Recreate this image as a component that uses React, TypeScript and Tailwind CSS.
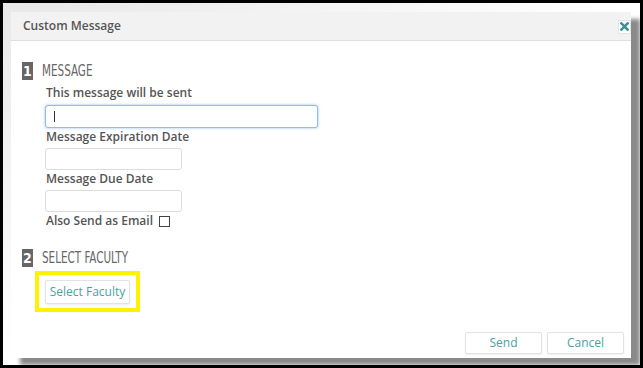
const sans = "font-['Open_Sans','Liberation_Sans',sans-serif]";
const narrow = "font-['DejaVu_Sans_Condensed','Liberation_Sans_Narrow',sans-serif]";

function SectionHeading({ num, title }: { num: string; title: string }) {
  return (
    <div className="flex h-[18px] items-center">
      <span
        className={`flex h-[18px] w-[11px] items-center justify-center bg-[#666] text-[14px] font-bold text-white ${narrow}`}
      >
        {num}
      </span>
      <span
        className={`ml-[9px] inline-block origin-left scale-x-[0.7] text-[16.5px] leading-none text-[#666] ${narrow}`}
      >
        {title}
      </span>
    </div>
  );
}

function Label({ children }: { children: React.ReactNode }) {
  return (
    <div className="ml-px h-[18px] text-[12px] font-semibold leading-[18px] text-[#555]">
      {children}
    </div>
  );
}

function CloseIcon() {
  return (
    <svg width="9" height="9" viewBox="0 0 10 10">
      <path
        d="M1.5 1.5 L8.5 8.5 M8.5 1.5 L1.5 8.5"
        stroke="#3d9292"
        strokeWidth="2.8"
        strokeLinecap="square"
      />
    </svg>
  );
}

const btn =
  "rounded-[2px] border border-[#e2e2e2] bg-white text-[12px] text-[#45a3a3] shadow-[0_1px_2px_rgba(0,0,0,0.07)]";

export default function App() {
  return (
    <div className={`h-[368px] w-[643px] bg-black p-[3px] ${sans}`}>
      <div className="h-full w-full overflow-hidden bg-gradient-to-br from-[#e8e8e8] via-white to-white pl-[8px] pt-[9px]">
        <div className="flex h-[346px] w-[620px] flex-col bg-white shadow-[9px_7px_4px_#8a8a8a]">
          <div className="flex h-[29px] shrink-0 items-center justify-between border-b border-[#e0e0e0] bg-[#f2f2f2] pl-[12px]">
            <span className="text-[12px] font-semibold text-[#555]">
              Custom Message
            </span>
            <span className="mt-[1px] flex h-[14px] w-[13px] items-center justify-center border border-[#e4e4e4] bg-white">
              <CloseIcon />
            </span>
          </div>

          <div className="flex flex-1 flex-col pl-[11px] pt-[21px]">
            <SectionHeading num="1" title="MESSAGE" />
            <div className="ml-[23px] mt-[3px] flex flex-col">
              <div className="ml-px h-[20px] text-[12px] font-semibold leading-[20px] text-[#555]">
                This message will be sent
              </div>
              <div className="mt-[2px] flex h-[23px] w-[273px] items-center rounded-[3px] border border-[#8ebde8] bg-white pl-[8px] shadow-[0_0_3px_rgba(82,151,222,0.6)]">
                <span className="h-[11px] w-px bg-[#333]" />
              </div>
              <Label>Message Expiration Date</Label>
              <div className="mt-[2px] h-[22px] w-[137px] rounded-[3px] border border-[#dcdcdc] bg-white" />
              <Label>Message Due Date</Label>
              <div className="mt-[2px] h-[22px] w-[137px] rounded-[3px] border border-[#dcdcdc] bg-white" />
              <div className="flex h-[18px] items-center">
                <span className="ml-px text-[12px] font-semibold text-[#555]">
                  Also Send as Email
                </span>
                <span className="ml-[6px] h-[11px] w-[11px] border border-[#444] bg-white" />
              </div>
            </div>

            <div className="mt-[19px]">
              <SectionHeading num="2" title="SELECT FACULTY" />
            </div>
            <div className="ml-[13px] mt-[4px] flex h-[41px] w-[105px] border-[4px] border-[#fff200] pl-[6px] pt-[5px]">
              <button className={`h-[24px] w-[85px] ${btn}`}>Select Faculty</button>
            </div>

            <div className="mt-auto flex justify-end gap-[5px] pb-[4px] pr-[7px]">
              <button className={`h-[22px] w-[77px] ${btn}`}>Send</button>
              <button className={`h-[22px] w-[77px] ${btn}`}>Cancel</button>
            </div>
          </div>
        </div>
      </div>
    </div>
  );
}
